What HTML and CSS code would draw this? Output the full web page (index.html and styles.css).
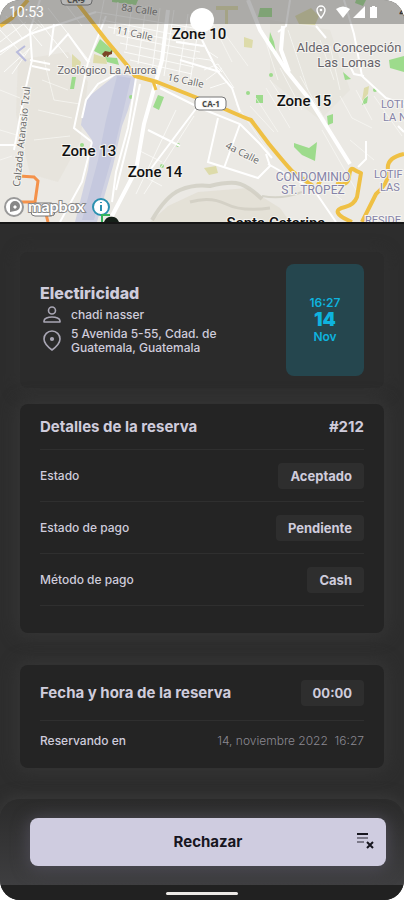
FILE: index.html
```html
<!DOCTYPE html>
<html lang="es">
<head>
    <meta charset="UTF-8">
    <meta name="viewport" content="width=device-width, initial-scale=1.0">
    <title>Detalles de la reserva</title>
    <link rel="stylesheet" href="styles.css">
</head>
<body>
<div class="screen">
    <header class="map">
        <svg class="map-view" viewBox="0 0 404 222" preserveAspectRatio="xMidYMin slice" role="img" aria-label="Mapa">
            <rect width="404" height="222" fill="#ebe9e4"/>
            <!-- terrain -->
            <g fill="#e4e1d8">
                <path d="M18 60l50-8 20 30-8 60-22 40-28-8-14-60z" opacity=".6"/>
                <path d="M270 20l60 10 20 60-30 30-50-40z" opacity=".5"/>
                <path d="M168 206l30-14 50-4 32 20 10 14H150z"/>
            </g>
            <g fill="none" stroke="#d0cec2" opacity=".8">
                <path d="M152 220q14-24 28-30t30-4q16-4 26-3t26 16" stroke-width="4"/>
                <path d="M190 202q20-6 36 2t44 4" stroke-width="3"/>
                <path d="M262 196q20 4 40-4" stroke-width="2"/>
            </g>
            <!-- airport -->
            <path d="M88 97l24-19 6-6 19 6-9 32-6 16-9 40-16 56H75l13-52 4-30-11-15 3-20z" fill="#d0d2e2"/>
            <path d="M117 76l14 2-17 72-20 70H82l16-60 8-40z" fill="#c5c8de"/>
            <!-- parks -->
            <g fill="#9ddb8c">
                <path d="M100 39l14 12-8 6-12-6z"/>
                <path d="M105 57l12 1 2 7-12-3z"/>
                <path d="M112 0h26l-2 5-24-3z"/>
                <path d="M158 95l6 2-5 13-6-3z"/>
                <path d="M72 77h4l-2 12h-4z"/>
                <path d="M260 8h12v9h-14z"/>
                <path d="M270 32l4 10 3 16-5-6-3-10z"/>
                <path d="M389 60l15-4v16l-14-4z"/>
                <path d="M294 143l15 5 8-6-2 19-13-6-8-8z"/>
                <path d="M327 116l6-2v9l-5 2z"/>
                <path d="M343 72l8 7-6 1z"/>
                <path d="M256 95h7v8h-7z"/>
                <path d="M364 99l4-3-1 7-5 2z"/>
                <path d="M356 0h10l-3 6-8-3z"/>
                <circle cx="375" cy="90" r="2"/>
                <circle cx="271" cy="75" r="2"/>
                <circle cx="248" cy="93" r="2"/>
                <circle cx="131" cy="97" r="2"/>
                <circle cx="178" cy="145" r="2"/>
                <circle cx="162" cy="166" r="2"/>
                <circle cx="82" cy="145" r="2"/>
            </g>
            <g fill="#dddbaa">
                <path d="M94 54l12 4 1 6-14-1z"/>
                <path d="M72 54l9 8-2 10-7-4z"/>
                <path d="M244 37l9 3-1 8-8-1z"/>
                <path d="M295 16l16-8 8 8-4 9-16-1z"/>
                <path d="M204 168l12-2 2 7-9 2z"/>
                <path d="M364 88l5-2-1 8-6 7z"/>
                <path d="M216 6h22v4h-10v14h-3V10h-9z"/>
            </g>
            <!-- small streets -->
            <g fill="none" stroke="#fbfbf9" stroke-width="1">
                <path d="M0 42l26-20M0 55l38-28M4 72l26-24M12 10l30 36M0 30l24 26M38 20l30 38M48 8l42 54M30 48l-18 26M6 16l16 22M28 16l14 12M62 0l20 26M72 0l24 30"/>
                <path d="M96 12l110 18M102 20l100 20M108 27l94 19M116 35l84 17M120 43l76 16M124 52l70 15M130 60l62 14M104 0l-6 30M118 2l-4 32M132 4l-6 46M146 6l-8 58M160 8l-8 64M174 10l-10 66M188 14l-10 66M200 18l-10 64"/>
                <path d="M204 70l14-6 16 24M206 80l16-12M210 88l18-6M196 58l14 2 12 12M206 50l12 8"/>
                <path d="M270 80l20 30M280 68l22 42M236 104l34 50M250 106l24 26M256 98l22 34M266 88l24 40M300 76l26 46M262 30l16 50M288 30l20 60M320 40l14 40M330 46l10 44M212 22l20 40M222 30l26 36" opacity=".6"/>
                <path d="M340 96l12 22 20 10M356 90l16 30M350 140l24 20M322 130l34 60M302 170l40 30M374 96l28 40" opacity=".6"/>
                <path d="M44 60l10 40 26 4M42 80l26 10M38 110l34 8M34 140l36-4M0 90l20 8M0 130l20 6M0 160l12-4" opacity=".6"/>
                <path d="M132 170l30 16M138 150l24 12M176 110l-40 84M194 116l-50 78" opacity=".8"/>
            </g>
            <g fill="none" stroke="#fff" stroke-width="2">
                <path d="M40 0L30 30 32 60 24 96 14 150"/>
                <path d="M0 52l30-18 66-22M30 60l20 4M32 66l18 4"/>
                <path d="M54 24l-4 30 18-20 20 28M106 16l-18 46-14 66 18 14M92 142l-10 40-22 40"/>
                <path d="M116 74l-18 10-12 16-4 18"/>
                <path d="M0 145h20"/>
                <path d="M202 40l16 32 14 16 8 24M176 42l28 4M180 60l40 12"/>
                <path d="M290 0l-4 26-8 6M316 26l10 12M344 0l10 34 8 42 24 22 18 6M364 76l-10-2-6-12"/>
                <path d="M218 118l-10 44 50 16 12-12-4-12M240 124l-16 44M160 88l40 20 40 16 20 20 12 14"/>
                <path d="M148 130l32 16M150 170l48-64M136 78l-8 50-12 44-4 30"/>
                <path d="M140 84l-10 50-14 56"/>
                <path d="M366 141v18l-8 8M398 126l6 6"/>
                <path d="M268 164l46 26 22 32"/>
            </g>
            <g fill="none" stroke="#fff" stroke-width="4">
                <path d="M168 10l-6 50-18 64-8 46-24 46"/>
                <path d="M248 0l12 30 26 40 24 30 20 32 20 32"/>
                <path d="M283 26l-2 24 8 22"/>
            </g>
            <path d="M25 46l-8 6 9 9" fill="none" stroke="#b9bbdc" stroke-width="2"/>
            <!-- main roads -->
            <g fill="none" stroke="#efc044" stroke-linejoin="round">
                <path d="M0 26l12-8L28 0" stroke-width="4"/>
                <path d="M78 4l28 36 20 24 9 12 22 6 38 15 32 13q18 8 24 10l18 24q18 22 24 28l20 14" stroke-width="4"/>
                <path d="M153 81l3 9" stroke-width="3"/>
                <path d="M318 185l4-8M336 183q12 4 13-6t4-8 8 4l-4 24q-3 8-12 10t-7 6 14 9" stroke-width="4"/>
                <path d="M404 154q-18 4-16 16t-12 24l-14 28" stroke-width="4"/>
            </g>
            <path d="M19 176l15 1 4 4-3 21H21M42 208l4 6 2 8" fill="none" stroke="#f4924b" stroke-width="3"/>
            <!-- zoo -->
            <path d="M102 54l3-3 5 1 2-2v4l-3 1-1 2h-1v-2l-2 2h-1z" fill="#7b4526"/>
            <!-- route shields -->
            <g fill="#fff" stroke="#777" stroke-width="1">
                <rect x="61" y="-8" width="31" height="13" rx="4"/>
                <rect x="195" y="97" width="31" height="13" rx="4"/>
                <rect x="31" y="203" width="24" height="13" rx="4"/>
            </g>
            <g class="map-label shield">
                <text x="76" y="3">CA-9</text>
                <text x="211" y="107">CA-1</text>
            </g>
            <!-- labels -->
            <g class="map-label zone">
                <text x="199" y="39">Zone 10</text>
                <text x="304" y="106">Zone 15</text>
                <text x="89" y="156">Zone 13</text>
                <text x="155" y="177">Zone 14</text>
                <text x="276" y="228">Santa Catarina</text>
            </g>
            <g class="map-label place">
                <text x="107" y="74" class="small">Zoológico La Aurora</text>
                <text x="349" y="52">Aldea Concepción</text>
                <text x="349" y="67">Las Lomas</text>
            </g>
            <g class="map-label street">
                <text transform="translate(139 13) rotate(8)">8a Calle</text>
                <text transform="translate(134 37) rotate(12)">11 Calle</text>
                <text transform="translate(185 84) rotate(12)">16 Calle</text>
                <text transform="translate(241 156) rotate(27)">4a Calle</text>
                <text transform="translate(25 137) rotate(-84)">Calzada Atanasio Tzul</text>
            </g>
            <g class="map-label district">
                <text x="313" y="181">CONDOMINIO</text>
                <text x="313" y="194">ST. TROPEZ</text>
            </g>
            <g class="map-label district edge">
                <text x="381" y="108">LOTI</text>
                <text x="383" y="121">LA N</text>
                <text x="374" y="178">LOTIF</text>
                <text x="380" y="191">LAS</text>
                <text x="365" y="224">RESIDE</text>
            </g>
            <text class="edge corner" x="399" y="16">4</text>
            <!-- attribution -->
            <circle cx="14" cy="207" r="9" fill="#fff" stroke="#999" stroke-width="2"/>
            <path d="M10 212v-6a5 5 0 1 1 5 5zm3-5l2-2 2 2-2 2z" fill="#888" fill-rule="evenodd"/>
            <text class="map-brand" x="28" y="212">mapbox</text>
            <circle cx="101" cy="207" r="8" fill="#fff" stroke="#2b91b0" stroke-width="2"/>
            <path d="M101 205v6m0-9v1" stroke="#2b91b0" stroke-width="2"/>
            <path d="M102 222v-7h8" fill="none" stroke="#35b45b" stroke-width="2"/>
            <path d="M104 222a8 8 0 0 1 15 0z" fill="#162019"/>
        </svg>
        <div class="status-bar">
            <span class="time">10:53</span>
            <svg class="status-icons" width="64" height="14" viewBox="0 0 64 14" aria-hidden="true">
                <path d="M6 1a4 4 0 0 0-4 4c0 3 4 8 4 8s4-5 4-8a4 4 0 0 0-4-4z" fill="none" stroke="#fff" stroke-width="1.4"/>
                <circle cx="6" cy="5" r="1.3" fill="#fff"/>
                <path d="M21 4q7-5 14 0l-7 9z" fill="#fff"/>
                <path d="M50 1v12H38z" fill="#fff"/>
                <path d="M57 1h3v1h2v11h-7V2h2z" fill="#fff"/>
            </svg>
        </div>
        <span class="camera"></span>
    </header>

    <main class="content">
        <section class="card service">
            <div class="service-info">
                <h1>Electiricidad</h1>
                <div class="info-row">
                    <svg width="24" height="20" viewBox="0 0 24 20" fill="none" stroke="#a9a6b4" stroke-width="1.6" aria-hidden="true">
                        <circle cx="12" cy="5.5" r="3.5"/>
                        <path d="M4 17v-1c0-2.500 4-4 8-4s8 1.500 8 4v1z" stroke-linejoin="round"/>
                    </svg>
                    <span>chadi nasser</span>
                </div>
                <div class="info-row">
                    <svg width="24" height="24" viewBox="0 0 24 24" fill="none" stroke="#a9a6b4" stroke-width="1.6" aria-hidden="true">
                        <path d="M12 2c-4.500 0-8 3.500-8 8 0 5 8 11 8 11s8-6 8-11c0-4.500-3.500-8-8-8z" stroke-linejoin="round"/>
                        <circle cx="12" cy="10" r="1.3" fill="#a9a6b4"/>
                    </svg>
                    <span>5 Avenida 5-55, Cdad. de Guatemala, Guatemala</span>
                </div>
            </div>
            <div class="date-box">
                <span>16:27</span>
                <strong>14</strong>
                <span>Nov</span>
            </div>
        </section>

        <section class="card details">
            <div class="card-head">
                <h2>Detalles de la reserva</h2>
                <strong>#212</strong>
            </div>
            <div class="row">
                <span>Estado</span>
                <span class="badge">Aceptado</span>
            </div>
            <div class="row">
                <span>Estado de pago</span>
                <span class="badge">Pendiente</span>
            </div>
            <div class="row">
                <span>Método de pago</span>
                <span class="badge">Cash</span>
            </div>
        </section>

        <section class="card schedule">
            <div class="card-head">
                <h2>Fecha y hora de la reserva</h2>
                <span class="badge">00:00</span>
            </div>
            <div class="row">
                <span>Reservando en</span>
                <span class="muted">14, noviembre 2022&nbsp; 16:27</span>
            </div>
        </section>
    </main>

    <footer class="actions">
        <button type="button" class="reject">
            <span>Rechazar</span>
            <svg width="20" height="18" viewBox="0 0 20 18" fill="none" stroke="#17161f" aria-hidden="true">
                <path d="M2 2h11" stroke-width="2"/>
                <path d="M2 6h11M2 10h7" stroke-width="1.6" opacity=".6"/>
                <path d="M12 10l6 6m0-6l-6 6" stroke-width="2"/>
            </svg>
        </button>
    </footer>
    <div class="nav-bar"><span></span></div>
</div>
</body>
</html>
```
FILE: styles.css
```css
* {
    box-sizing: border-box;
}
body {
    margin: 0;
    background-color: #fff;
    color: #cfccdc;
    font-family: Inter, "Open Sans", sans-serif;
    font-size: 12px;
    font-weight: 500;
    line-height: 14px;
}
h1, h2 {
    margin: 0;
    line-height: 20px;
}
h1 {
    font-size: 16px;
    font-weight: 800;
}
h2 {
    font-size: 15px;
    font-weight: 700;
}
.screen {
    display: flex;
    flex-direction: column;
    min-height: 100vh;
    border-radius: 20px;
    overflow: hidden;
    background-color: #2d2d2d;
}

/* Map */
.map {
    position: relative;
    border-bottom: 2px solid #161616;
}
.map-view {
    display: block;
    width: 100%;
    height: 222px;
}
.map-label {
    font-family: "Open Sans", sans-serif;
    font-weight: 400;
    text-anchor: middle;
    paint-order: stroke;
    stroke: #f5f4f0;
    stroke-width: 2px;
}
.zone {
    font-family: Roboto, sans-serif;
    font-size: 15px;
    font-weight: 500;
    fill: #111;
}
.place {
    font-family: Roboto, sans-serif;
    font-size: 13px;
    fill: #66636a;
}
.place .small {
    font-size: 11px;
}
.street {
    font-size: 10px;
    fill: #666;
}
.district {
    font-family: Roboto, sans-serif;
    font-size: 12px;
    fill: #8583a8;
}
.edge {
    font-size: 11px;
    text-anchor: start;
}
.corner {
    font-weight: 700;
    fill: #222;
}
.shield {
    font-size: 8px;
    font-weight: 700;
    fill: #444;
}
.map-brand {
    font-family: Lato, sans-serif;
    font-size: 16px;
    font-weight: 700;
    fill: #fff;
    stroke: #888;
    stroke-width: 2px;
    paint-order: stroke;
}
.status-bar {
    position: absolute;
    top: 0;
    left: 0;
    right: 0;
    height: 24px;
    padding: 0 25px 0 9px;
    display: flex;
    justify-content: space-between;
    align-items: center;
    background-color: rgba(85, 85, 85, 0.42);
    color: #fff;
    font-family: Roboto, sans-serif;
    font-size: 14px;
    font-weight: 400;
}
.camera {
    position: absolute;
    top: 8px;
    left: 50%;
    width: 24px;
    height: 24px;
    margin-left: -12px;
    border-radius: 50%;
    background-color: #fff;
}

/* Cards */
.content {
    flex: 1;
    padding: 28px 20px 30px;
}
.card {
    padding: 0 20px;
    border-radius: 8px;
    background-color: #242424;
    box-shadow: 0 0 16px 4px #353535;
}
.service {
    display: flex;
    justify-content: space-between;
    align-items: center;
    padding: 12px 20px;
    background-color: #2b2b2b;
    box-shadow: 0 2px 16px 2px #313131;
}
.service-info {
    width: 190px;
    padding-bottom: 2px;
}
.info-row {
    display: flex;
    align-items: center;
    gap: 7px;
    margin-top: 2px;
}
.info-row svg {
    flex: none;
}
.date-box {
    display: flex;
    flex-direction: column;
    justify-content: center;
    align-items: center;
    width: 78px;
    height: 112px;
    border-radius: 8px;
    background-color: #25464e;
    color: #0eb3df;
    font-weight: 600;
}
.date-box strong {
    font-size: 19px;
    line-height: 20px;
}
.details {
    margin-top: 16px;
    padding-bottom: 27px;
}
.schedule {
    margin-top: 32px;
    padding-bottom: 8px;
}
.card-head, .row {
    display: flex;
    justify-content: space-between;
    align-items: center;
}
.card-head {
    height: 46px;
    border-bottom: 1px solid #2f2f2f;
}
.card-head strong {
    font-size: 15px;
}
.row {
    height: 52px;
    border-bottom: 1px solid #2f2f2f;
}
.schedule .card-head {
    height: 56px;
}
.schedule .row {
    height: 39px;
    border-bottom: 0;
}
.badge {
    padding: 6px 12px;
    border-radius: 4px;
    background-color: #2e2e2e;
    font-size: 13px;
    font-weight: 700;
}
.muted {
    color: #8b8992;
    font-weight: 300;
}

/* Footer */
.actions {
    padding: 19px 18px 19px 30px;
    border-radius: 20px 20px 0 0;
    background: linear-gradient(#2b2b2b, #3e3e40);
    box-shadow: 0 0 14px 2px #3a3a3a;
}
.reject {
    display: grid;
    grid-template-columns: 20px 1fr 20px;
    align-items: center;
    width: 100%;
    height: 48px;
    padding: 0 11px 2px;
    border: 0;
    border-radius: 8px;
    background-color: #cfcce0;
    color: #17161f;
    box-shadow: 0 2px 16px 2px #4d4b55;
    font-family: inherit;
    font-size: 15px;
    font-weight: 700;
    cursor: pointer;
}
.reject span {
    grid-column: 2;
}
.nav-bar {
    display: flex;
    justify-content: center;
    align-items: center;
    height: 15px;
    padding-top: 2px;
    background-color: #212121;
}
.nav-bar span {
    width: 72px;
    height: 3px;
    border-radius: 2px;
    background-color: #ece9e6;
}
```
